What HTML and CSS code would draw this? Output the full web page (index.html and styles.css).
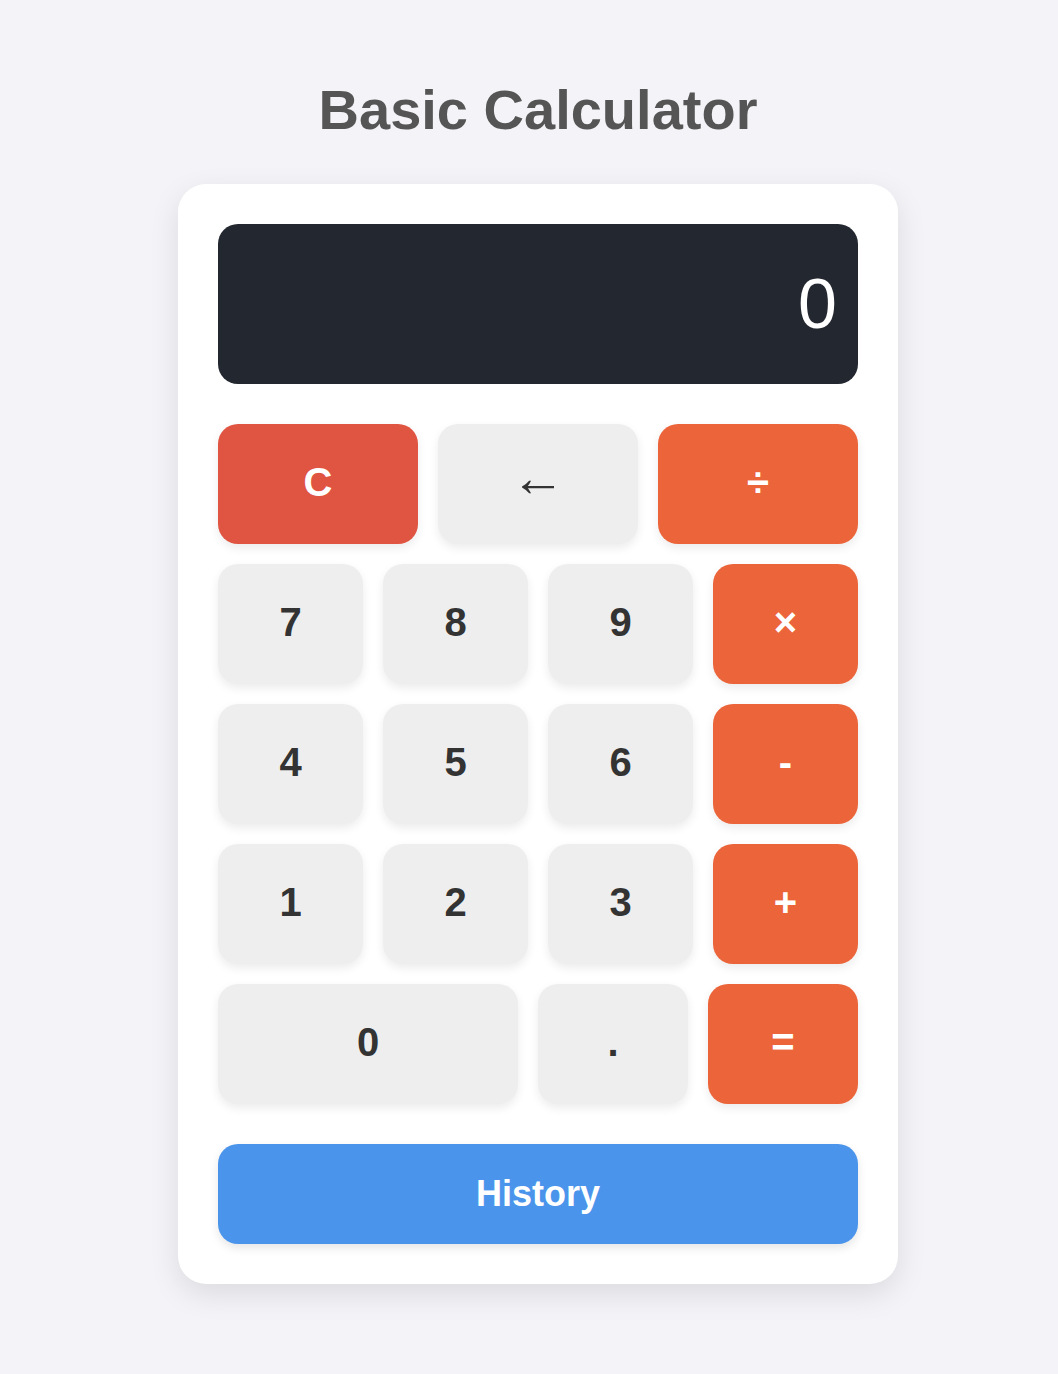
FILE: index.html
```html
<!DOCTYPE html>
<html lang="en">
<head>
<meta charset="utf-8">
<title>Basic Calculator</title>
<link rel="stylesheet" href="styles.css">
</head>
<body>
  <h1 class="title">Basic Calculator</h1>
  <div class="calculator">
    <div class="display">0</div>
    <div class="row row-3">
      <button class="btn btn-clear">C</button>
      <button class="btn btn-back">&larr;</button>
      <button class="btn btn-op">&divide;</button>
    </div>
    <div class="row row-4">
      <button class="btn">7</button>
      <button class="btn">8</button>
      <button class="btn">9</button>
      <button class="btn btn-op">&times;</button>
    </div>
    <div class="row row-4">
      <button class="btn">4</button>
      <button class="btn">5</button>
      <button class="btn">6</button>
      <button class="btn btn-op">-</button>
    </div>
    <div class="row row-4">
      <button class="btn">1</button>
      <button class="btn">2</button>
      <button class="btn">3</button>
      <button class="btn btn-op">+</button>
    </div>
    <div class="row row-last">
      <button class="btn">0</button>
      <button class="btn">.</button>
      <button class="btn btn-op">=</button>
    </div>
    <button class="history">History</button>
  </div>
</body>
</html>
```

FILE: styles.css
```css
* { box-sizing: border-box; }

html {
  background: #f4f4f8;
}

body {
  margin: 0;
  padding: 78px 0 80px 18px;
  min-height: 100vh;
  background: #f4f4f8;
  font-family: "Liberation Sans", Arial, sans-serif;
  display: flex;
  flex-direction: column;
  align-items: center;
}

.title {
  margin: 0 0 42px;
  font-size: 56px;
  line-height: 64px;
  font-weight: 700;
  color: #555555;
}

.calculator {
  width: 720px;
  padding: 40px;
  background: #ffffff;
  border-radius: 28px;
  box-shadow: 0 10px 30px rgba(0, 0, 0, 0.1);
  display: flex;
  flex-direction: column;
  gap: 20px;
}

.display {
  height: 160px;
  background: #23272f;
  border-radius: 20px;
  color: #ffffff;
  font-size: 70px;
  font-weight: 300;
  display: flex;
  align-items: center;
  justify-content: flex-end;
  padding: 0 21px;
  margin-bottom: 20px;
}

.row {
  display: grid;
  gap: 20px;
}

.row-3 { grid-template-columns: repeat(3, 1fr); }
.row-4 { grid-template-columns: repeat(4, 1fr); }
.row-last { grid-template-columns: 300px 150px 150px; }

.btn {
  height: 120px;
  border: none;
  border-radius: 20px;
  background: #eeeeee;
  color: #333333;
  font-family: "Liberation Sans", Arial, sans-serif;
  font-size: 40px;
  font-weight: 700;
  box-shadow: 0 4px 10px rgba(0, 0, 0, 0.08);
  padding: 0 0 3px;
  cursor: pointer;
}

.btn-clear {
  background: #e05442;
  color: #ffffff;
}

.btn-back {
  font-size: 54px;
  font-weight: 400;
  line-height: 1;
  padding: 0 0 14px;
}

.btn-op {
  background: #ec6439;
  color: #ffffff;
}

.history {
  margin-top: 20px;
  height: 100px;
  border: none;
  border-radius: 20px;
  background: #4a95eb;
  color: #ffffff;
  font-family: "Liberation Sans", Arial, sans-serif;
  font-size: 36px;
  font-weight: 700;
  box-shadow: 0 4px 10px rgba(0, 0, 0, 0.1);
  cursor: pointer;
}
```
